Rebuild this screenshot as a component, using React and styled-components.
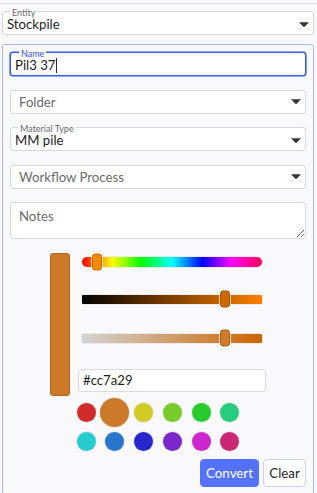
import styled, { createGlobalStyle } from 'styled-components';

const Global = createGlobalStyle`
  body {
    margin: 0;
    background: #f9f9fb;
    font-family: Lato, "Noto Sans", sans-serif;
    color: #222;
  }
`

const Page = styled.div`
  padding: 0 3px 0 2px;
`

const TopRule = styled.div`
  height: 1px;
  margin: 3px -3px 0 -2px;
  background: #dcdce3;
`

const Field = styled.div`
  position: relative;
  box-sizing: border-box;
  height: 24px;
  display: flex;
  align-items: center;
  padding: ${p => (p.$labelled ? '2px' : '0')} 4px 0 ${p => (p.$placeholder ? 8 : 4)}px;
  background: #fff;
  border: 1px solid ${p => (p.$focus ? '#3357f0' : '#d7d7dc')};
  box-shadow: ${p => (p.$focus ? '0 0 0 0.6px #3357f0' : 'none')};
  border-radius: 3px;
  font-size: 13.2px;
  line-height: 14px;
  color: ${p => (p.$placeholder ? '#6b6b6b' : '#1e1e1e')};
`

const FloatLabel = styled.span`
  position: absolute;
  left: ${p => p.$left || 6}px;
  top: -4px;
  padding: 0 2px;
  font-size: 9px;
  line-height: 9px;
  color: ${p => (p.$focus ? '#3357f0' : '#6a6a6a')};
  background: linear-gradient(to bottom, #f9f9fb 50%, #fff 50%);
`

const Value = styled.span`
  flex: 1;
  display: flex;
  align-items: center;
`

const TextCaret = styled.span`
  display: inline-block;
  width: 1px;
  height: 15px;
  margin-left: 1px;
  background: #1a2a70;
`

const Arrow = () => (
  <svg width="10" height="5" viewBox="0 0 10 5">
    <path d="M0 0.3 H10 L5.3 5 H4.7 Z" fill="#333" />
  </svg>
)

const Panel = styled.div`
  margin-top: 9px;
  border: 1px solid #a9b8fa;
  border-radius: 3px;
  padding: 7px;
  display: flex;
  flex-direction: column;
  gap: 13.5px;
`

const Notes = styled.textarea`
  box-sizing: border-box;
  height: 37px;
  padding: 5px 8px;
  margin: 0;
  display: block;
  width: 100%;
  border: 1px solid #d7d7dc;
  border-radius: 3px;
  background: #fff;
  font-family: Lato, "Noto Sans", sans-serif;
  font-size: 13.2px;
  resize: vertical;
  outline: none;
  &::placeholder {
    color: #6b6b6b;
  }
`

const Picker = styled.div`
  display: flex;
  flex-direction: column;
`

const PickerTop = styled.div`
  display: flex;
  justify-content: center;
  gap: 8px;
`

const Preview = styled.div`
  width: 20px;
  height: 143px;
  box-sizing: border-box;
  background: #cc7a29;
  border: 1px solid #b3651b;
  border-radius: 3px;
`

const SliderCol = styled.div`
  width: 188px;
  display: flex;
  flex-direction: column;
`

const Track = styled.div`
  position: relative;
  margin: ${p => p.$mt}px 4px 0;
  height: ${p => p.$h}px;
  border-radius: ${p => p.$r}px;
  background: ${p => p.$bg};
  box-shadow: 0 0 0 0.5px rgba(0, 0, 0, 0.12);
`

const Thumb = styled.div`
  position: absolute;
  top: 50%;
  width: 10px;
  height: 17px;
  box-sizing: border-box;
  transform: translate(-50%, -50%);
  border-radius: 3px;
  background: ${p => p.$c};
  border: 1px solid ${p => p.$b};
  box-shadow: 0 0 0 1px rgba(255, 255, 255, 0.7);
`

const HexBox = styled.div`
  margin-top: 26px;
  height: 23px;
  box-sizing: border-box;
  display: flex;
  align-items: center;
  padding: 0 4px;
  background: #fff;
  border: 1px solid #d9d9dd;
  border-radius: 3px;
  font-size: 13.2px;
  color: #1e1e1e;
`

const Swatches = styled.div`
  margin-top: 2px;
  display: grid;
  grid-template-columns: repeat(6, 28.7px);
  grid-auto-rows: 29px;
  justify-content: center;
  place-items: center;
`

const Swatch = styled.div`
  width: ${p => (p.$on ? 29 : 19)}px;
  height: ${p => (p.$on ? 29 : 19)}px;
  border-radius: 50%;
  background: ${p => p.$c};
  box-shadow: 0 0 0 1px rgba(0, 0, 0, 0.07);
`

const Actions = styled.div`
  margin-top: 3.5px;
  display: flex;
  justify-content: flex-end;
  gap: 4px;
`

const Button = styled.button`
  height: 28px;
  box-sizing: border-box;
  width: ${p => (p.$primary ? 59 : 43)}px;
  padding: 0;
  font-family: Lato, "Noto Sans", sans-serif;
  font-size: 13.3px;
  border-radius: 4px;
  border: 1px solid ${p => (p.$primary ? '#5572ff' : '#c9d1f6')};
  background: ${p => (p.$primary ? '#5572ff' : '#fff')};
  color: ${p => (p.$primary ? '#fff' : '#1e1e1e')};
`

const colors = [
  '#d12b2b', '#cc7a29', '#d1cb24', '#78cc29', '#25cc2b', '#27cc7c',
  '#27cccc', '#2775cc', '#2727cc', '#7c27cc', '#cc27cc', '#cc2775',
]

const Select = ({ label, value, placeholder }) => (
  <Field $placeholder={!value} $labelled={!!label}>
    {label && <FloatLabel $left={7}>{label}</FloatLabel>}
    <Value>{value || placeholder}</Value>
    <Arrow />
  </Field>
)

const App = () => {
  return (
    <Page>
      <Global />
      <TopRule />
      <div style={{ marginTop: 7 }}>
        <Select label="Entity" value="Stockpile" />
      </div>
      <Panel>
        <Field $focus $labelled>
          <FloatLabel $left={8} $focus>Name</FloatLabel>
          <Value>Pil3 37<TextCaret /></Value>
        </Field>
        <Select placeholder="Folder" />
        <Select label="Material Type" value="MM pile" />
        <Select placeholder="Workflow Process" />
        <Notes placeholder="Notes" />
        <Picker>
          <PickerTop>
            <Preview />
            <SliderCol>
              <Track
                $mt={4}
                $h={10}
                $r={5}
                $bg="linear-gradient(to right, #f00, #ff0 17%, #0f0 33%, #0ff 50%, #00f 67%, #f0f 83%, #f05)"
              >
                <Thumb style={{ left: '8.3%' }} $c="#f58a00" $b="#cc6d00" />
              </Track>
              <Track $mt={28} $h={9} $r={1} $bg="linear-gradient(to right, #000, #ff8000)">
                <Thumb style={{ left: '79.5%' }} $c="#cc6a00" $b="#a65400" />
              </Track>
              <Track $mt={30} $h={9} $r={1} $bg="linear-gradient(to right, #d4d4d4, #cc6600)">
                <Thumb style={{ left: '79.5%' }} $c="#cf7a2c" $b="#ad5e16" />
              </Track>
              <HexBox>#cc7a29</HexBox>
            </SliderCol>
          </PickerTop>
          <Swatches>
            {colors.map(c => (
              <Swatch key={c} $c={c} $on={c === '#cc7a29'} />
            ))}
          </Swatches>
          <Actions>
            <Button $primary>Convert</Button>
            <Button>Clear</Button>
          </Actions>
        </Picker>
      </Panel>
    </Page>
  )
}

export default App;
